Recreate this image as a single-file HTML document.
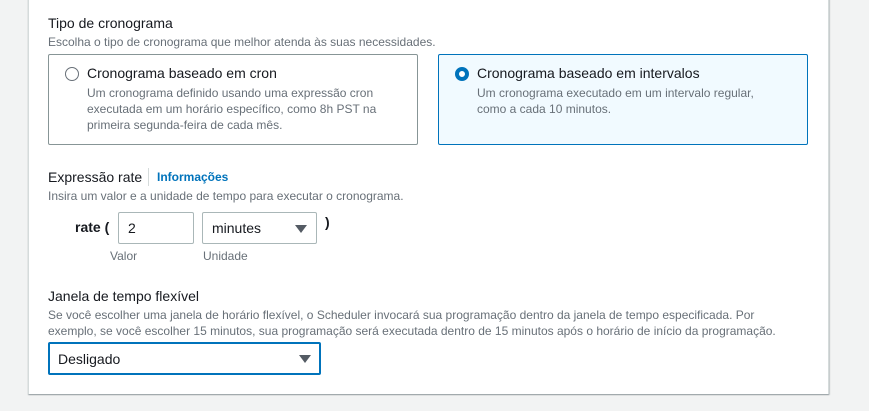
<!DOCTYPE html>
<html><head><meta charset="utf-8"><style>
*{box-sizing:border-box;margin:0;padding:0}
body{width:869px;height:411px;background:#f2f3f3;font-family:"Liberation Sans",Arial,sans-serif;color:#16191f;position:relative;overflow:hidden}
.panel{position:absolute;left:28px;top:-2px;width:801px;height:396px;background:#fff;border-left:1px solid #d5dbdb;border-right:1px solid #d5dbdb;box-shadow:0 1px 1px rgba(0,28,36,.3),1px 1px 1px rgba(0,28,36,.15)}
.a{position:absolute;white-space:nowrap}
.h{font-size:14px;color:#16191f}
.d{font-size:12px;color:#687078}
.card{position:absolute;top:54px;width:370px;height:91px;border:1px solid #879596;border-radius:2px}
.card.sel{border-color:#0073bb;background:#f1faff}
.radio{position:absolute;left:16px;top:12px;width:14px;height:14px;border-radius:50%;border:1.5px solid #687078;background:#fff}
.sel .radio{border:4px solid #0073bb}
.ct{position:absolute;left:38px;top:10px;font-size:14px}
.cd{position:absolute;left:38px;top:30px;font-size:12px;color:#687078;line-height:16px}
.box{position:absolute;border:1px solid #aab7b8;border-radius:2px;background:#fff;font-size:14px;padding-left:9px;display:flex;align-items:center}
.tri{position:absolute;width:0;height:0;border-left:6px solid transparent;border-right:6px solid transparent;border-top:8px solid #545b64}
</style></head><body>
<div class="panel"></div>
<div class="a h" style="left:48px;top:15px">Tipo de cronograma</div>
<div class="a d" style="left:48px;top:35px">Escolha o tipo de cronograma que melhor atenda às suas necessidades.</div>
<div class="card" style="left:48px"><div class="radio"></div><div class="ct">Cronograma baseado em cron</div><div class="cd">Um cronograma definido usando uma expressão cron<br>executada em um horário específico, como 8h PST na<br>primeira segunda-feira de cada mês.</div></div>
<div class="card sel" style="left:438px"><div class="radio"></div><div class="ct">Cronograma baseado em intervalos</div><div class="cd">Um cronograma executado em um intervalo regular,<br>como a cada 10 minutos.</div></div>
<div class="a h" style="left:48px;top:169px">Expressão rate</div>
<div class="a" style="left:148px;top:168px;width:1px;height:18px;background:#d5dbdb"></div>
<div class="a" style="left:157px;top:170px;font-size:12px;font-weight:bold;color:#0073bb">Informações</div>
<div class="a d" style="left:48px;top:189px">Insira um valor e a unidade de tempo para executar o cronograma.</div>
<div class="a" style="left:75px;top:219px;font-size:14px;font-weight:bold">rate (</div>
<div class="box" style="left:118px;top:212px;width:76px;height:32px">2</div>
<div class="box" style="left:202px;top:212px;width:115px;height:32px">minutes<div class="tri" style="left:92px;top:12px"></div></div>
<div class="a" style="left:325px;top:214px;font-size:14px;font-weight:bold">)</div>
<div class="a d" style="left:110px;top:249px">Valor</div>
<div class="a d" style="left:203px;top:249px">Unidade</div>
<div class="a h" style="left:48px;top:288px">Janela de tempo flexível</div>
<div class="a d" style="left:48px;top:307px;line-height:16px">Se você escolher uma janela de horário flexível, o Scheduler invocará sua programação dentro da janela de tempo especificada. Por<br>exemplo, se você escolher 15 minutos, sua programação será executada dentro de 15 minutos após o horário de início da programação.</div>
<div class="box" style="left:48px;top:342px;width:273px;height:33px;border:2px solid #0073bb;padding-left:8px">Desligado<div class="tri" style="left:249px;top:11px"></div></div>
</body></html>
